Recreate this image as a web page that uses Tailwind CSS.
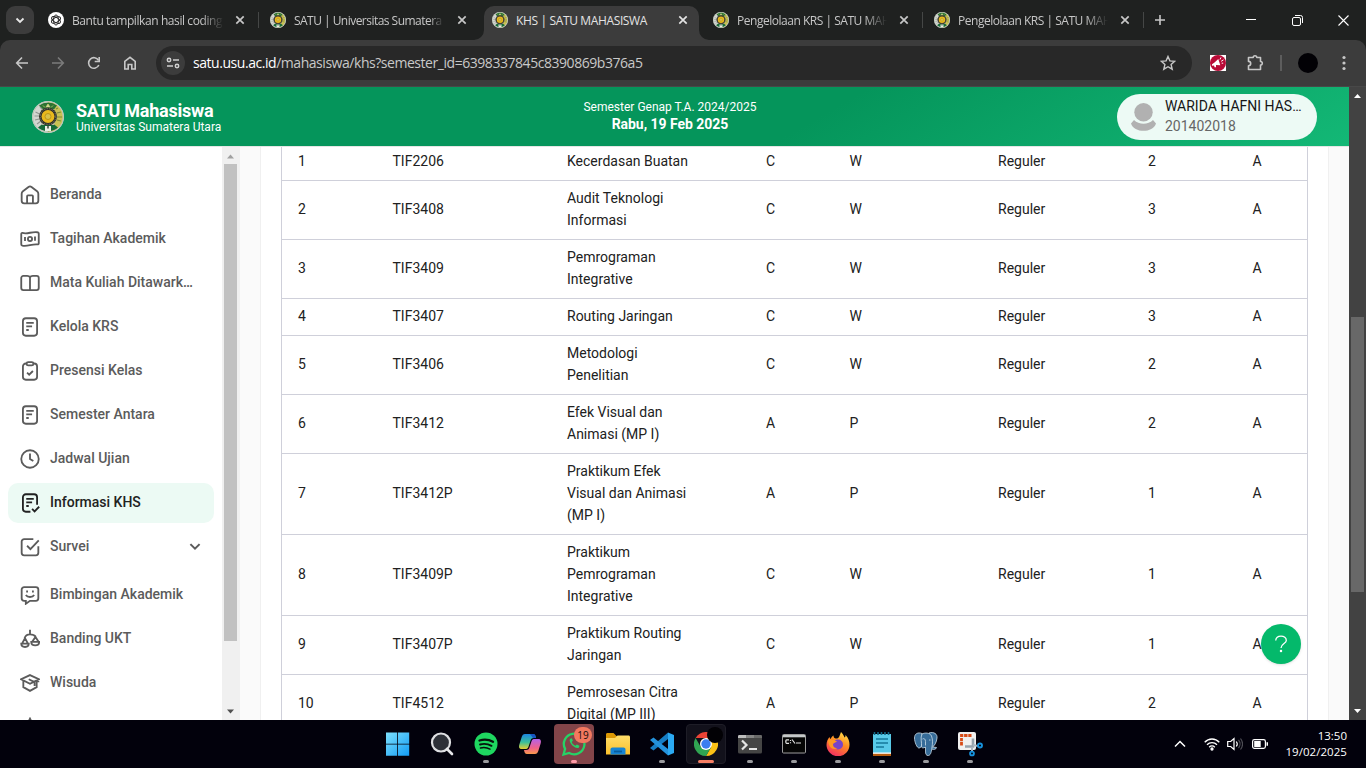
<!DOCTYPE html>
<html lang="id">
<head>
<meta charset="utf-8">
<title>KHS | SATU MAHASISWA</title>
<script src="https://cdn.jsdelivr.net/npm/@tailwindcss/browser@4"></script>
</head>
<body class="w-[1366px] h-[768px] overflow-hidden flex flex-col bg-white font-[Roboto,sans-serif]">
<svg class="hidden">
  <symbol id="seal" viewBox="0 0 32 32">
    <circle cx="16" cy="16" r="16" fill="#d3d6d0"/>
    <path d="M16 1A15 15 0 0 1 16 31z" fill="#c9c153"/>
    <path d="M7 4.500A15 15 0 0 1 25 4.500L21.500 9a9 9 0 0 0-11 0z" fill="#2b7232"/>
    <path d="M6 26.500A15 15 0 0 0 26 26.500L21 22.500H11z" fill="#176a38"/>
    <path d="M3.500 11l4 2M2.500 15h5M3 19l4-1M5 23l4-3M8 6l3 3" stroke="#8f9690" stroke-width="1.100"/>
    <path d="M25 12l4-1M25 16h5M25 19l4 1M24 8l2-1" stroke="#7d8a3a" stroke-width="1.100"/>
    <path d="M16 3l2 3h-4zM11 4.500l2 2M21 4.500l-2 2" fill="#d7d9b5" stroke="#c9cf6c" stroke-width=".8"/>
    <path d="M10 8h12l3 8-3 8H10l-3-8z" fill="#b9b8a4"/>
    <circle cx="16" cy="15.500" r="9" fill="#2c2d26"/>
    <circle cx="16" cy="15.500" r="7.800" fill="none" stroke="#8d8a78" stroke-width=".8" stroke-dasharray="1.500 1"/>
    <circle cx="16" cy="15.500" r="6.500" fill="#e9b91d"/>
    <circle cx="16" cy="15.500" r="3" fill="#d9c24a" stroke="#b28d12" stroke-width=".8"/>
    <path d="M13 30v-5h6v5z" fill="#e9efe5"/><path d="M15.200 25h1.600v2.500h-1.600z" fill="#454d42"/>
    <circle cx="16" cy="16" r="15.400" fill="none" stroke="#b9c4b4" stroke-width="1"/>
  </symbol>
  <symbol id="x" viewBox="0 0 12 12"><path d="M2.300 2.300l7.400 7.400M9.700 2.300L2.300 9.700" stroke="currentColor" stroke-width="1.700" fill="none"/></symbol>
  <symbol id="doc" viewBox="0 0 24 24"><rect x="3.500" y="1.500" width="17" height="21" rx="3.500"/><path d="M7.500 7h9M7.500 11.300h7M7.500 15.600h3"/></symbol>
</svg>

<!-- Tab strip -->
<div class="h-10 shrink-0 bg-[#1f2120] flex items-center text-[#c7c7c7] font-['Open_Sans',sans-serif] text-xs [&_span]:pt-0.5">
  <div class="ml-1.5 w-7 h-7 rounded-[9px] bg-[#3c3c3c] flex items-center justify-center"><svg class="w-3 h-3" viewBox="0 0 12 12"><path d="M2.500 4.500L6 8l3.500-3.500" fill="none" stroke="#e8e8e8" stroke-width="1.800"/></svg></div>
  <div class="ml-3.5 w-[210px] h-full flex items-center">
    <svg class="w-4 h-4 shrink-0" viewBox="0 0 16 16"><circle cx="8" cy="8" r="8" fill="#fff"/><g fill="none" stroke="#222" stroke-width=".9"><ellipse cx="8" cy="8" rx="2.400" ry="5"/><ellipse cx="8" cy="8" rx="2.400" ry="5" transform="rotate(60 8 8)"/><ellipse cx="8" cy="8" rx="2.400" ry="5" transform="rotate(120 8 8)"/></g></svg>
    <span class="ml-2 w-[152px] whitespace-nowrap tracking-[-0.41px] mask-r-from-85%">Bantu tampilkan hasil coding</span>
    <svg class="w-3 h-3 ml-[10px]"><use href="#x"/></svg>
  </div>
  <div class="w-px h-4 bg-[#454746]"></div>
  <div class="ml-[11px] w-[214px] h-full flex items-center">
    <svg class="w-4 h-4 shrink-0"><use href="#seal"/></svg>
    <span class="ml-2 w-[150px] whitespace-nowrap tracking-[-0.53px] mask-r-from-90%">SATU | Universitas Sumatera</span>
    <svg class="w-3 h-3 ml-3"><use href="#x"/></svg>
  </div>
  <div class="w-[215px] h-[34px] mt-1.5 bg-[#3c3c3c] rounded-t-[10px] flex items-center text-[#e3e3e3] relative">
    <svg class="absolute bottom-0 -left-2.5 w-2.5 h-2.5" viewBox="0 0 10 10"><path d="M10 0v10H0A10 10 0 0 0 10 0" fill="#3c3c3c"/></svg>
    <svg class="absolute bottom-0 -right-2.5 w-2.5 h-2.5" viewBox="0 0 10 10"><path d="M0 0v10h10A10 10 0 0 1 0 0" fill="#3c3c3c"/></svg>
    <svg class="w-4 h-4 ml-2 mb-1.5 shrink-0"><use href="#seal"/></svg>
    <span class="ml-2 mb-1.5 w-[150px] whitespace-nowrap tracking-[-0.36px]">KHS | SATU MAHASISWA</span>
    <svg class="w-3 h-3 ml-[11px] mb-1.5"><use href="#x"/></svg>
  </div>
  <div class="ml-[14px] w-[209px] h-full flex items-center">
    <svg class="w-4 h-4 shrink-0"><use href="#seal"/></svg>
    <span class="ml-2 w-[150px] whitespace-nowrap tracking-[-0.48px] mask-r-from-85%">Pengelolaan KRS | SATU MAH</span>
    <svg class="w-3 h-3 ml-[11px]"><use href="#x"/></svg>
  </div>
  <div class="w-px h-4 bg-[#454746]"></div>
  <div class="ml-[11px] w-[209px] h-full flex items-center">
    <svg class="w-4 h-4 shrink-0"><use href="#seal"/></svg>
    <span class="ml-2 w-[150px] whitespace-nowrap tracking-[-0.48px] mask-r-from-85%">Pengelolaan KRS | SATU MAH</span>
    <svg class="w-3 h-3 ml-[11px]"><use href="#x"/></svg>
  </div>
  <div class="w-px h-4 bg-[#454746]"></div>
  <svg class="w-3 h-3 ml-2.5" viewBox="0 0 12 12"><path d="M6 1v10M1 6h10" stroke="#c7c7c7" stroke-width="1.600"/></svg>
  <div class="ml-auto mr-[17px] flex items-center gap-[35px]">
    <svg class="w-2.5 h-2.5 mr-px" viewBox="0 0 10 10"><path d="M0 4.500h10" stroke="#fff"/></svg>
    <svg class="w-[11px] h-[11px]" viewBox="0 0 11 11" fill="none" stroke="#fff"><rect x=".5" y="2.500" width="8" height="8" rx="1.500"/><path d="M3 .5h5.500a2 2 0 0 1 2 2V8"/></svg>
    <svg class="w-[11px] h-[11px]" viewBox="0 0 11 11"><path d="M.5.500l10 10M10.500.500l-10 10" stroke="#fff" stroke-width="1.100"/></svg>
  </div>
</div>

<!-- Toolbar -->
<div class="h-[47px] shrink-0 bg-[#1f2120]">
 <div class="h-full bg-[#3c3c3c] rounded-t-[10px] border-b border-[#484848] flex items-center">
  <div class="ml-[14px] flex gap-5 text-[#c7c7c7]">
    <svg class="w-4 h-4" viewBox="0 0 16 16" fill="none" stroke="currentColor" stroke-width="1.600"><path d="M14 8H3M8 2.500L2.700 8 8 13.500"/></svg>
    <svg class="w-4 h-4 text-[#7b7b7b]" viewBox="0 0 16 16" fill="none" stroke="currentColor" stroke-width="1.600"><path d="M2 8h11M8 2.500L13.300 8 8 13.500"/></svg>
    <svg class="w-4 h-4" viewBox="0 0 16 16" fill="none" stroke="currentColor" stroke-width="1.600"><path d="M12.800 10A5.300 5.300 0 1 1 12.500 5.300"/><path d="M13.200 2v4.500H8.700"/></svg>
    <svg class="w-4 h-4" viewBox="0 0 16 16" fill="none" stroke="currentColor" stroke-width="1.600"><path d="M2.800 14V6.300L8 2.300l5.200 4V14H9.800V9.500H6.200V14z"/></svg>
  </div>
  <div class="ml-[18px] w-[1036px] h-[34px] rounded-full bg-[#282828] flex items-center">
    <div class="ml-[5px] w-6 h-6 rounded-full bg-[#3c3c3c] flex items-center justify-center"><svg class="w-3.5 h-3.5" viewBox="0 0 14 14" fill="none" stroke="#d0d0d0" stroke-width="1.500"><circle cx="3" cy="4" r="1.700"/><path d="M7 4h6M1 10h6"/><circle cx="11" cy="10" r="1.700"/></svg></div>
    <span class="ml-2 font-['Open_Sans',sans-serif] text-sm tracking-[-0.455px] whitespace-nowrap text-[#c9c9c9]"><span class="text-white">satu.usu.ac.id</span>/mahasiswa/khs?semester_id=6398337845c8390869b376a5</span>
    <svg class="ml-auto mr-4 w-4 h-4" viewBox="0 0 16 16"><path d="M8 1.500l1.900 4.400 4.800.4-3.600 3.200 1.100 4.700L8 11.700l-4.200 2.500 1.100-4.700L1.300 6.300l4.800-.4z" fill="none" stroke="#c7c7c7" stroke-width="1.400"/></svg>
  </div>
  <svg class="ml-[18px] w-4 h-4" viewBox="0 0 16 16"><path d="M0 0h16v16H0z" fill="#fff"/><circle cx="8" cy="8" r="8" fill="#b90a37"/><path d="M2 9.200l2.500-1.800 3.800-3.400 2 6.200-4.300-.2v2.200H4.600L4 10.500l-2 .2z" fill="#fff"/><path d="M10 4.500l.9-2M11.200 6.300l2.300-1.500M11.700 8.200h1.500" stroke="#fff"/></svg>
  <svg class="ml-5 w-[18px] h-[18px]" viewBox="0 0 18 18"><path d="M2.500 3.500h4.700a1.800 1.800 0 0 1 3.600 0h3.700v4a1.800 1.800 0 0 1 0 3.600v4.400h-12v-3.700a2.200 2.200 0 0 0 0-4.400z" fill="none" stroke="#c7c7c7" stroke-width="1.600" stroke-linejoin="round"/></svg>
  <div class="ml-4 w-0.5 h-4 bg-[#5d5d5d]"></div>
  <div class="ml-4 w-5 h-5 rounded-full bg-[#020105]"></div>
  <svg class="ml-[18px] w-4 h-4" viewBox="0 0 16 16" fill="#c7c7c7"><circle cx="8" cy="2.500" r="1.600"/><circle cx="8" cy="8" r="1.600"/><circle cx="8" cy="13.500" r="1.600"/></svg>
 </div>
</div>

<!-- Page -->
<div class="h-[633px] shrink-0 flex">
  <div class="w-[1349px] flex flex-col">
    <header class="h-[60px] shrink-0 border-b border-[#e4e6e5] bg-[linear-gradient(150deg,#05955b_60%,#13b876_100%)] grid grid-cols-3 text-white">
      <div class="flex items-center pl-8">
        <svg class="w-8 h-8"><use href="#seal"/></svg>
        <div class="ml-3 mt-0.5"><div class="text-lg leading-[18px] font-bold tracking-[-0.25px]">SATU Mahasiswa</div><div class="text-xs leading-[14px]">Universitas Sumatera Utara</div></div>
      </div>
      <div class="text-center pt-[11px] -ml-[9px]"><div class="text-xs leading-[18px]">Semester Genap T.A. 2024/2025</div><div class="text-sm leading-[17px] font-bold tracking-[-0.03px]">Rabu, 19 Feb 2025</div></div>
      <div class="flex justify-end items-center pr-8">
        <div class="w-[200px] h-[46px] rounded-full bg-[#edfaf5] flex items-center">
          <svg class="ml-3.5 w-[25px] h-7" viewBox="0 0 25 28" fill="#b1b1b1"><circle cx="12.500" cy="9.200" r="9.200"/><path d="M0 20.500l3-3.500c5 5 14 5 19 0l3 3.500c-3 9.800-22 9.800-25 0z"/></svg>
          <div class="ml-[9px] -mt-0.5 text-sm leading-5"><div class="text-[#161616] whitespace-nowrap">WARIDA HAFNI HAS…</div><div class="text-[#666]">201402018</div></div>
        </div>
      </div>
    </header>
    <div class="h-[573px] flex overflow-hidden">
      <nav class="w-[222px] h-full pl-2 pt-[28px] overflow-hidden text-sm font-medium text-[#5b5b5b]">
        <div class="w-[206px] [&>div]:h-10 [&>div]:mb-1 [&>div]:pb-0.5 [&>div]:flex [&>div]:items-center [&>div]:gap-2.5 [&>div]:pl-3 [&>div]:rounded-[10px] [&_svg]:w-5 [&_svg]:h-5 [&_svg]:mt-0.5 [&_svg]:fill-none [&_svg]:stroke-current [&_svg]:stroke-[2.2px]">
          <div><svg viewBox="0 0 24 24"><path d="M2 10.500C2 9 2.500 8.300 3.500 7.500l6.700-5.200a3 3 0 0 1 3.600 0l6.700 5.200c1 .8 1.500 1.500 1.500 3V19a3 3 0 0 1-3 3H5a3 3 0 0 1-3-3z"/><path d="M8.500 22v-8.500a1 1 0 0 1 1-1h5a1 1 0 0 1 1 1V22"/></svg>Beranda</div>
          <div><svg viewBox="0 0 24 24"><path d="M1.500 6c0-1 .5-1.500 1.500-1.300 6 2 11-2 18-.8 1 .1 1.500.7 1.500 1.600V17c0 1-.6 1.600-1.600 1.500-7-.8-12 3-18 1.500-1-.3-1.400-.8-1.400-1.700z"/><circle cx="12" cy="12" r="2.500"/><path d="M6 9.500v5M18 9v5"/></svg>Tagihan Akademik</div>
          <div><svg viewBox="0 0 24 24"><path d="M12 5.500C11.500 4 10 3.500 8.500 3.500H4A2.500 2.500 0 0 0 1.500 6v12A2.500 2.500 0 0 0 4 20.500h16a2.500 2.500 0 0 0 2.500-2.500V6A2.500 2.500 0 0 0 20 3.500h-4.500c-1.500 0-3 .5-3.500 2zM12 5.500v15"/></svg>Mata Kuliah Ditawark…</div>
          <div><svg><use href="#doc"/></svg>Kelola KRS</div>
          <div><svg viewBox="0 0 24 24"><path d="M8 3H7a3.500 3.500 0 0 0-3.500 3.500V19A3.500 3.500 0 0 0 7 22.500h10a3.500 3.500 0 0 0 3.500-3.500V6.500A3.500 3.500 0 0 0 17 3h-1"/><rect x="8" y="1.300" width="8" height="4" rx="1.800"/><path d="M8.500 14l2.500 2.500 4.500-4.500"/></svg>Presensi Kelas</div>
          <div><svg><use href="#doc"/></svg>Semester Antara</div>
          <div><svg viewBox="0 0 24 24"><circle cx="12" cy="12" r="10.500"/><path d="M12 5.500V12l4 2.500"/></svg>Jadwal Ujian</div>
          <div class="bg-[#ecfaf4] text-[#222]"><svg viewBox="0 0 24 24"><path d="M12.500 22.500H7A3.500 3.500 0 0 1 3.500 19V5A3.500 3.500 0 0 1 7 1.500h10A3.500 3.500 0 0 1 20.500 5v9M7.500 7h9M7.500 11.300h7M7.500 15.600h3"/><path d="M14.500 19l3 3 5.500-5.500"/></svg>Informasi KHS</div>
          <div class="!h-[44px] !pb-1.5"><svg viewBox="0 0 24 24"><path d="M16 2.500H5a3 3 0 0 0-3 3V19a3 3 0 0 0 3 3h14a3 3 0 0 0 3-3v-8"/><path d="M8.500 10.500l4 4L22.500 4"/></svg>Survei<svg class="ml-auto mr-[9px]" viewBox="0 0 24 24"><path d="M6.500 8.500L12 14l5.500-5.500" stroke-width="2.400"/></svg></div>
          <div><svg viewBox="0 0 24 24"><path d="M5 2.500h14a3 3 0 0 1 3 3V16a3 3 0 0 1-3 3h-7l-5 3.500V19H5a3 3 0 0 1-3-3V5.500a3 3 0 0 1 3-3z"/><path d="M8.500 6.500v2.500M15.500 6.500v2.500M7 12c2 3.200 8 3.200 10 0"/></svg>Bimbingan Akademik</div>
          <div><svg viewBox="0 0 24 24"><path d="M12 1v5.500M5.500 11C6.500 8 9 6.500 12 6.500S17.500 7.500 19 9.500M6 11l-3.500 6.500h7zM18.500 9.500L14.500 15.500h8zM1.500 17.500c0 5.500 9 5.500 9 0zM13.500 15.500c0 5.500 9.500 5.500 9.500 0z"/></svg>Banding UKT</div>
          <div><svg viewBox="0 0 24 24"><path d="M12 2.500l10.500 5-10.500 5.500L1.500 7.500zM4 9.500V17l8 4.500 8-4.500V9.500M10.500 7.500l7 3.500v4.500M22 8v3"/></svg>Wisuda</div>
          <div><svg viewBox="0 0 24 24"><path d="M12 2l3 6 7 1-5 5 1 7-6-3-6 3 1-7-5-5 7-1z"/></svg></div>
        </div>
      </nav>
      <div class="w-[18px] h-full bg-[#f0f0f0] flex flex-col items-center pr-0.5">
        <svg class="mt-[7px] w-[7px] h-[5px] shrink-0" viewBox="0 0 7 5"><path d="M0 4.500L3.500.500 7 4.500z" fill="#a0a0a0"/></svg>
        <div class="mt-[5px] w-[13px] h-[477px] bg-[#c1c1c1] shrink-0"></div>
        <svg class="mt-auto mb-[6px] w-[7px] h-[5px]" viewBox="0 0 7 5"><path d="M0 .5L3.500 4.500 7 .5z" fill="#505050"/></svg>
      </div>
      <main class="flex-1 bg-[#fafafa] h-full flex justify-center">
        <div class="w-[1069px] h-[573px] bg-white border-x border-[#f0f0f0] px-5 overflow-hidden relative">
          <div id="rows" class="-mt-[3px] border-x border-[#cfd0da] text-sm leading-[22px] text-[#212121]"></div>
          <div class="absolute left-[1000px] top-[477px] w-10 h-10 rounded-full bg-[#04b96b] shadow-sm flex items-center justify-center">
            <svg class="w-4 h-[18px]" viewBox="0 0 16 18" fill="none" stroke="#fff" stroke-width="1.300"><path d="M2.700 5.500C3 2.700 5 1.200 8 1.200s5.300 1.500 5.300 4.200C13.300 8.500 8 8.500 8 13"/><circle cx="8" cy="16" r=".6" fill="#fff"/></svg>
          </div>
        </div>
      </main>
    </div>
  </div>
  <div class="w-[17px] h-full bg-[#424242] flex flex-col items-center">
    <svg class="mt-[7px] w-[7px] h-1 shrink-0" viewBox="0 0 7 4"><path d="M0 4L3.500 0 7 4z" fill="#fff"/></svg>
    <div class="mt-[219px] w-[13px] h-[275px] bg-[#686868] shrink-0"></div>
    <svg class="mt-auto mb-[7px] w-[7px] h-1" viewBox="0 0 7 4"><path d="M0 0l3.500 4L7 0z" fill="#fff"/></svg>
  </div>
</div>

<!-- Taskbar -->
<div class="h-12 shrink-0 bg-[#02010c] flex items-center">
  <div class="ml-[376px] h-full flex items-center [&>div]:w-11 [&>div]:h-full [&>div]:flex [&>div]:items-center [&>div]:justify-center [&>div]:relative [&_i]:absolute [&_i]:bottom-[5px] [&_i]:left-[19px] [&_i]:w-1.5 [&_i]:h-[3px] [&_i]:rounded-full [&_i]:bg-[#9a9a9e]">
    <div><svg class="w-6 h-6" viewBox="0 0 24 24"><defs><linearGradient id="win" gradientUnits="userSpaceOnUse" x1="0" y1="0" x2="24" y2="24"><stop stop-color="#7ee0fc"/><stop offset="1" stop-color="#109bf5"/></linearGradient></defs><path d="M0 .500h11.200v11.200H0zM12 .500h11.200v11.200H12zM0 12.500h11.200v11.200H0zM12 12.500h11.200v11.200H12z" fill="url(#win)"/></svg></div>
    <div><svg class="w-6 h-6" viewBox="0 0 24 24"><circle cx="11" cy="10.500" r="9" fill="#2d3038" stroke="#dedfe2" stroke-width="2.200"/><path d="M17 17l5 5" stroke="#e6e7ea" stroke-width="2.600" stroke-linecap="round"/></svg></div>
    <div><svg class="w-6 h-6" viewBox="0 0 24 24"><circle cx="12" cy="12" r="11.500" fill="#1ed760"/><g fill="none" stroke="#06130c" stroke-linecap="round"><path d="M5.500 8.500c4.500-1.300 9.500-.9 13.500 1.300" stroke-width="2.300"/><path d="M6 12.500c4-1.100 8-.6 11.500 1.300" stroke-width="1.900"/><path d="M6.500 16c3.500-.8 6.500-.5 9.500 1.200" stroke-width="1.500"/></g></svg><i></i></div>
    <div><svg class="w-6 h-6" viewBox="0 0 24 24"><defs><linearGradient id="c1" x1="0" y1="0" x2="0" y2="1"><stop stop-color="#1c86e2"/><stop offset=".55" stop-color="#3bbe9a"/><stop offset="1" stop-color="#e7cd32"/></linearGradient><linearGradient id="c2" x1="0" y1="0" x2="0" y2="1"><stop stop-color="#b561e8"/><stop offset=".6" stop-color="#f0628a"/><stop offset="1" stop-color="#f99a4c"/></linearGradient></defs><path d="M7 2h8c2 0 2.500 1.500 3 4h-2c-2.500 0-3 1-3.600 3l-2 6c-.5 1.600-1.500 2-3 2H4c-3 0-3.500-2-2.500-5l2.200-7C4.400 3 5.200 2 7 2z" fill="url(#c1)"/><path d="M12 2h3c2 0 2.500 1.500 3 4h-3z" fill="#1754c0"/><path d="M17 22H9c-2 0-2.500-1.500-3-4h2c2.500 0 3-1 3.600-3l2-6c.5-1.600 1.500-2 3-2H20c3 0 3.500 2 2.500 5l-2.200 7c-.7 2-1.500 3-3.300 3z" fill="url(#c2)"/></svg></div>
    <div><div class="absolute inset-x-0.5 top-1 h-10 rounded bg-[#824449]"></div><svg class="w-6 h-6 relative" viewBox="0 0 24 24" fill="none" stroke="#25d366"><path d="M1.500 22.500l1.600-5.600A10.300 10.300 0 1 1 7.200 21z" stroke-width="2.300"/><path d="M8.300 6.800c-3 2.500 5 11.500 8.700 8.700l.4-1.800-2.500-1.300-1.500 1.400c-1.800-.8-3-2-3.700-3.800l1.200-1.300-1-2.400z" fill="#25d366" stroke="none"/></svg><span class="absolute left-[22px] top-[7px] w-[18px] h-4 rounded-full bg-[#f2785f] text-[10px] leading-4 text-center text-[#160b0b] font-['Open_Sans',sans-serif]">19</span><i class="!bg-[#ff9aa8]"></i></div>
    <div><svg class="w-6 h-6" viewBox="0 0 24 24"><defs><linearGradient id="fo" x2="0" y2="1"><stop stop-color="#ffdd6a"/><stop offset="1" stop-color="#fbc02c"/></linearGradient></defs><path d="M0 2.500c0-.8.500-1.500 1.500-1.500h6l3 3h10v5H0z" fill="#dc9804"/><path d="M0 6h9l2.500-2.500H22.500c.8 0 1.500.6 1.500 1.500v17.500H0z" fill="url(#fo)"/><path d="M4.500 22.500V17.500c0-1.300.8-2 2-2h11c1.200 0 2 .7 2 2v5z" fill="#1684d3"/><path d="M8 19.500h8" stroke="#085d9d" stroke-width="1.800"/></svg></div>
    <div><svg class="w-6 h-6" viewBox="0 0 24 24"><path d="M18 .500L24 3v18l-6 2.500z" fill="#2ba9f2"/><path d="M18 .500V7L3.500 18.500 0 16z" fill="#167dc4"/><path d="M18 23.500V17L3.500 5.500 0 8z" fill="#2492dc"/></svg><i></i></div>
    <div><div class="absolute inset-x-0.5 top-1 h-10 rounded border border-[#1e1d27] bg-[#12111b]"></div><svg class="w-6 h-6 relative" viewBox="0 0 24 24"><path d="M1.600 6A12 12 0 0 1 22.400 6H12z" fill="#ea4335"/><path d="M22.400 6A12 12 0 0 1 12 24l5.200-9L12 6z" fill="#fbc116"/><path d="M12 24A12 12 0 0 1 1.600 6l5.200 9 10.400 0z" fill="#30a552"/><circle cx="12" cy="12" r="6" fill="#fff"/><circle cx="12" cy="12" r="4.700" fill="#3b7df0"/></svg><b class="absolute left-[23px] top-[7px] w-4 h-4 rounded-full bg-[#020105]"></b><i class="!left-3.5 !w-4 !bg-[#f77f65]"></i></div>
    <div><svg class="w-6 h-6" viewBox="0 0 24 24"><rect y="3" width="24" height="18.500" rx="1.500" fill="#454545"/><path d="M0 6V4.500C0 3.500.5 3 1.500 3H8v3z" fill="#bdbdbd"/><path d="M8 3h8v3H8z" fill="#858585"/><path d="M16 3h6.500c1 0 1.500.5 1.500 1.500V6h-8z" fill="#696969"/><path d="M4 8.500l4.500 4.500L4 17.500M11 17h8" fill="none" stroke="#e5e5e5" stroke-width="2.200"/></svg><i></i></div>
    <div><svg class="w-6 h-6" viewBox="0 0 24 24"><rect x=".5" y="2.500" width="23" height="18.500" rx="1" fill="#050505" stroke="#9d9d9d"/><path d="M1 3h22v2.300H1z" fill="#c5c8ca"/><path d="M7 7.800H4.500c-1 0-1 3.500 0 3.500H7M8.500 8v1M8.500 10.300v1M10 7.500l3 4M14 11h5" fill="none" stroke="#e2e2e2" stroke-width="1.200"/></svg><i></i></div>
    <div><svg class="w-6 h-6" viewBox="0 0 24 24"><defs><linearGradient id="ff" x1=".8" y1="0" x2=".3" y2="1"><stop stop-color="#ffe24a"/><stop offset=".45" stop-color="#ff8b22"/><stop offset="1" stop-color="#f22d63"/></linearGradient></defs><path d="M15 0c2 2 3 4 3.500 5.500 1-.5 1-1.500 1-2.500 3 3 4 6.500 4 9.500A11.500 11.500 0 0 1 .5 13C.5 9.500 2 6.500 3.500 5c.2 1 .5 1.500 1 2 1-2 2-3 3-3.500 0 1.500.5 2.500 2 3 2 .3 3-.5 4-2.500.5-1.300 1-2.700 1.500-4z" fill="url(#ff)"/><circle cx="12" cy="12.500" r="5" fill="#7844c8"/><path d="M2 8c4-1 6 0 9 1.500-1.500 1.500-4 1-4 3.500 0 2 2 3.500 4.500 3-4 2.500-9 0-9.500-8z" fill="#ff9922"/></svg><i></i></div>
    <div><svg class="w-6 h-6" viewBox="0 0 24 24"><path d="M3 2h18v19H3z" fill="#58c9e8"/><path d="M3 20.500h18v3H3z" fill="#fff"/><path d="M3 21.800h18V24H3z" fill="#b85c10"/><path d="M4.500 0v3M8 0v3M11.500 0v3M15 0v3M18.500 0v3" stroke="#126785" stroke-width="1.600"/><path d="M6 7h12M6 11h12M6 15h8" stroke="#14789b" stroke-width="1.400"/></svg><i></i></div>
    <div><svg class="w-6 h-6" viewBox="0 0 24 24" fill="#376c99" stroke="#c9dce9" stroke-width=".8"><path d="M8 1.500C4 0 .5 1.500.5 6c0 4 2.500 10 4.500 10 1.500 0 3-2 3-4zM15 1c5-1.500 8.500 1 8 5-.4 4-2.500 8-4.500 9l4 .5c0 1.500-2.500 2.500-5 1.500z"/><path d="M8 2c2.500-1.500 8-1.500 9.500 2 1.500 4 1 8 .5 11-.5 4-1 8-3.500 8.500-2.500.3-3-1.500-3-4.500v-4c-2 1.500-4.500 1-4-1 .5-3-1.500-8 .5-12z"/><path d="M8.500 7c1.500-1 3 0 3 2.500v4M15 8h1.500" fill="none"/></svg><i></i></div>
    <div><svg class="w-6 h-6" viewBox="0 0 24 24" overflow="visible"><rect width="18" height="18" rx="2" fill="#f0f0f0"/><path d="M3.500 13.500V3.500h10" fill="none" stroke="#d84b17" stroke-width="2.800" stroke-dasharray="3.400 .8"/><path d="M7 14.500h8V6.500" fill="none" stroke="#97a3ad" stroke-width="2.600"/><path d="M15 13l5 1M14 15v5" stroke="#a9b5bf" stroke-width="2"/><g fill="none" stroke="#1692dd" stroke-width="1.900"><circle cx="22" cy="13.500" r="2"/><circle cx="14" cy="21.500" r="1.900"/></g></svg><i></i></div>
  </div>
  <div class="ml-auto mr-[19px] flex items-center text-white">
    <svg class="w-3 h-3" viewBox="0 0 12 12"><path d="M1 8.500l5-5 5 5" fill="none" stroke="#fff" stroke-width="1.500"/></svg>
    <svg class="ml-[18px] w-4 h-4" viewBox="0 0 16 16" fill="none" stroke="#fff" stroke-width="1.300"><path d="M.700 6.300c4-4.400 10.600-4.400 14.600 0M3 8.800c2.700-3 7.300-3 10 0M5.200 11.200c1.500-1.700 4.100-1.700 5.600 0"/><circle cx="8" cy="13" r="1" fill="#fff"/></svg>
    <svg class="ml-[7px] mr-px w-4 h-4" viewBox="0 0 16 16" fill="none" stroke="#fff" stroke-width="1.200"><path d="M.700 5.500h3L7 2.500v11l-3.300-3h-3zM9.300 5.500c1 1.300 1 3.700 0 5"/><path d="M11.500 4c2 2.300 2 5.700 0 8M13.500 2.500c2.500 3.300 2.500 7.700 0 11" stroke="#4d4d55"/></svg>
    <svg class="ml-2 w-4 h-4" viewBox="0 0 16 16"><rect x=".6" y="3.600" width="12.800" height="8.800" rx="1.800" fill="none" stroke="#fff" stroke-width="1.200"/><path d="M2.200 5h6.500v6H2.200zM14.500 6.200h1.500v3.600h-1.500z" fill="#fff"/></svg>
    <div class="ml-[16px] w-[63px] font-['Open_Sans',sans-serif] text-[11.500px] leading-4 whitespace-nowrap flex flex-col items-end">
      <span>13:50</span><span class="tracking-[0.05px]">19/02/2025</span></div>
  </div>
</div>
<script>
const rows = [
 ["TIF2206","Kecerdasan Buatan","C","W",2],
 ["TIF3408","Audit Teknologi\nInformasi","C","W",3],
 ["TIF3409","Pemrograman\nIntegrative","C","W",3],
 ["TIF3407","Routing Jaringan","C","W",3],
 ["TIF3406","Metodologi\nPenelitian","C","W",2],
 ["TIF3412","Efek Visual dan\nAnimasi (MP I)","A","P",2],
 ["TIF3412P","Praktikum Efek\nVisual dan Animasi\n(MP I)","A","P",1],
 ["TIF3409P","Praktikum\nPemrograman\nIntegrative","C","W",1],
 ["TIF3407P","Praktikum Routing\nJaringan","C","W",1],
 ["TIF4512","Pemrosesan Citra\nDigital (MP III)","A","P",2]
];
document.getElementById("rows").innerHTML = rows.map((r, i) =>
 `<div class="grid grid-cols-[94.5px_174.5px_199px_83.5px_148.5px_150px_104.5px_70px] items-center pt-1.5 pb-2 border-b border-[#cfd0da]">` +
 [i + 1, r[0], r[1], r[2], r[3], "Reguler", r[4], "A"].map(c => `<div class="pl-4 whitespace-pre">${c}</div>`).join("") + `</div>`).join("");
</script>
</body>
</html>
